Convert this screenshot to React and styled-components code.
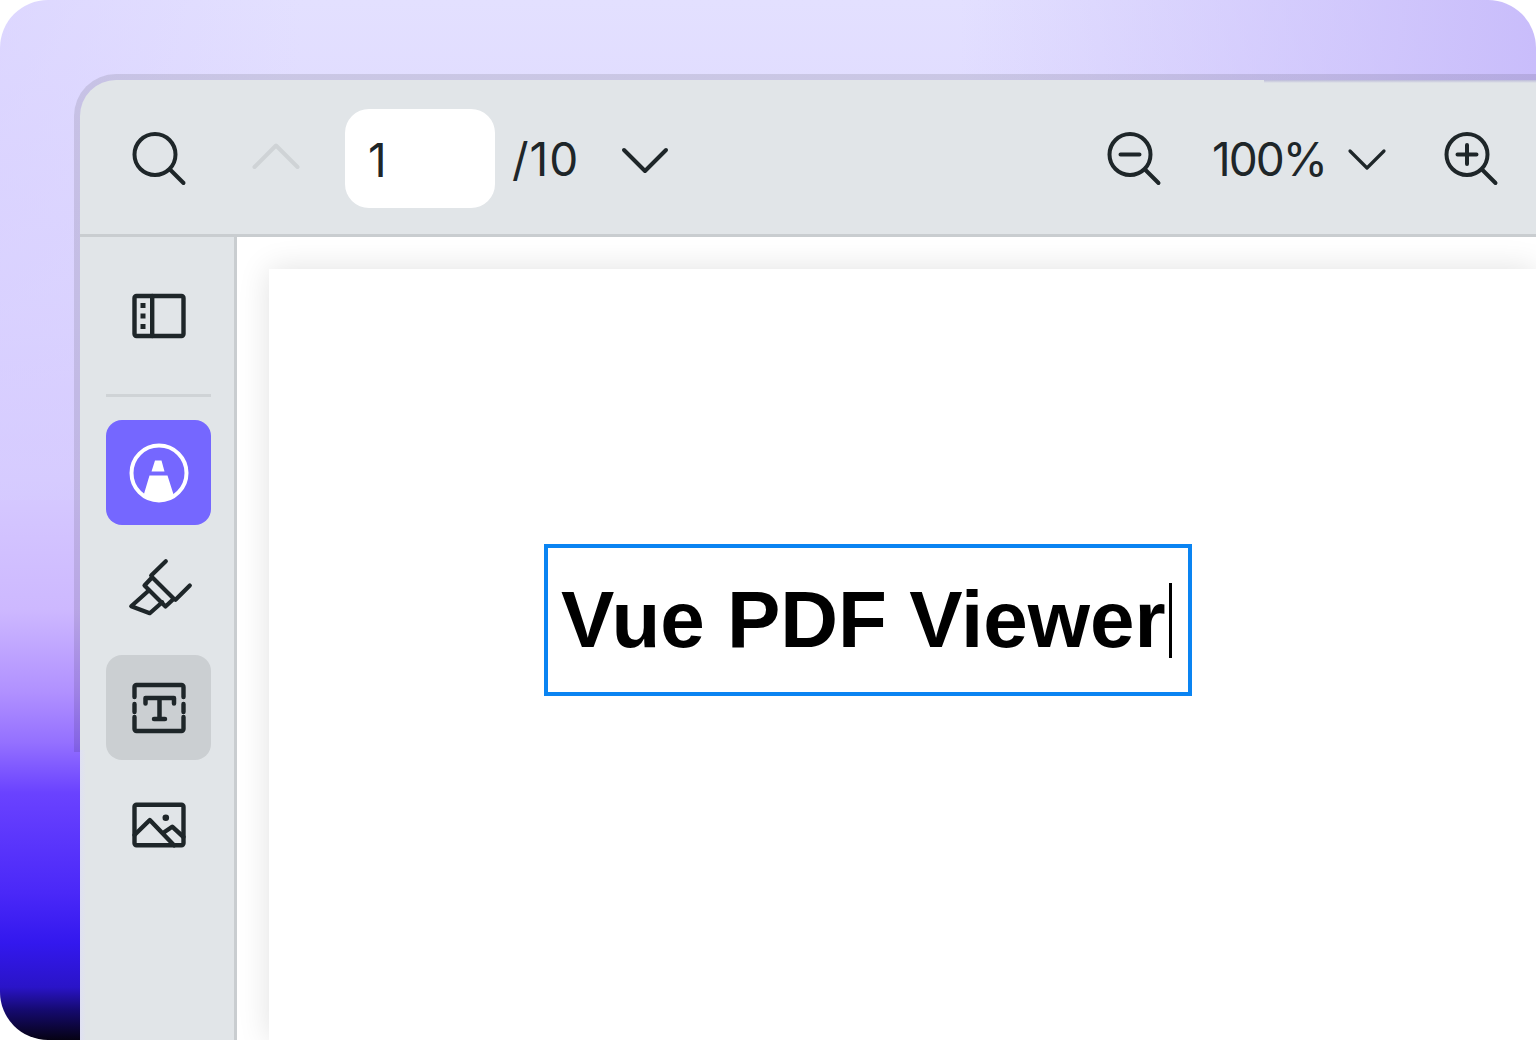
import styled, { createGlobalStyle } from "styled-components";

const GlobalStyle = createGlobalStyle`
  html, body {
    margin: 0;
    padding: 0;
    background: #ffffff;
  }
`;

const Stage = styled.div`
  width: 1536px;
  height: 1040px;
  box-sizing: border-box;
  padding: 74px 0 0 74px;
  overflow: hidden;
  border-radius: 48px 48px 0 48px;
  background:
    linear-gradient(to right, rgba(201, 189, 251, 0) 960px, #c9bdfb 1536px),
    linear-gradient(to right, rgba(214, 205, 255, 0.45) 0, rgba(214, 205, 255, 0) 300px) left top / 300px 500px no-repeat,
    linear-gradient(
      to bottom,
      #e3e0ff 0,
      #dcd5ff 300px,
      #d6caff 480px,
      #cdb8ff 610px,
      #b090ff 693px,
      #9470ff 743px,
      #6a42ff 793px,
      #4a28f8 893px,
      #3318ee 943px,
      #2a14c8 987px,
      #150a70 1010px,
      #060214 1040px
    );
  font-family: Inter, "Liberation Sans", sans-serif;
`;

const Frame = styled.div`
  position: relative;
  width: 1462px;
  height: 966px;
  box-sizing: border-box;
  padding: 6px 0 0 6px;
  border-top-left-radius: 42px;
  background: linear-gradient(to bottom, rgba(0, 0, 0, 0.1) 678px, rgba(0, 0, 0, 0) 678px);

  &::after {
    content: "";
    position: absolute;
    top: 6px;
    right: 0;
    width: 272px;
    height: 3px;
    background: linear-gradient(to bottom, rgba(120, 110, 190, 0.35), rgba(120, 110, 190, 0));
  }
`;

const Viewer = styled.div`
  display: grid;
  grid-template-rows: 157px 1fr;
  height: 100%;
  overflow: hidden;
  border-top-left-radius: 36px;
  background: #e1e5e8;
`;

const Toolbar = styled.div`
  display: flex;
  align-items: center;
  justify-content: space-between;
  box-sizing: border-box;
  padding: 0 13px 0 26px;
  border-bottom: 3px solid #c9cdd0;
`;

const ToolGroup = styled.div`
  display: flex;
  align-items: center;
`;

const IconSlot = styled.div`
  display: flex;
  align-items: center;
  justify-content: center;
  flex: none;
  width: ${(p) => p.$width || 105}px;
  height: 105px;
  box-sizing: border-box;
  border-radius: 16px;
  background: ${(p) => p.$bg || "transparent"};
`;

const PageChevronSlot = styled(IconSlot)`
  margin-left: 13px;
`;

const ZoomChevronSlot = styled(IconSlot)`
  margin-right: 8px;
`;

const Icon = styled.svg`
  display: block;
  flex: none;
  width: 60px;
  height: 60px;
  overflow: visible;
  fill: none;
  stroke: ${(p) => p.$color || "#1e2629"};
  stroke-width: ${(p) => p.$stroke || 4};
  stroke-linecap: round;
  stroke-linejoin: round;
`;

const PageInput = styled.div`
  width: 150px;
  height: 99px;
  box-sizing: border-box;
  margin: 3px 0 0 4px;
  padding-left: 23px;
  border-radius: 24px;
  background: #ffffff;
  color: #1e2629;
  font-size: 46px;
  font-weight: 400;
  line-height: 102px;
`;

const PageTotal = styled.span`
  margin: 3px 0 0 17px;
  color: #1e2629;
  font-size: 46px;
  font-weight: 400;
  letter-spacing: 1px;
  line-height: 1;
`;

const ZoomValue = styled.span`
  margin: 3px -2px 0 26px;
  color: #1e2629;
  font-size: 46px;
  font-weight: 400;
  letter-spacing: -2px;
  line-height: 1;
`;

const Body = styled.div`
  display: grid;
  grid-template-columns: 157px 1fr;
  min-height: 0;
`;

const Sidebar = styled.div`
  display: flex;
  flex-direction: column;
  align-items: flex-start;
  box-sizing: border-box;
  padding: 26px 0 0 26px;
  border-right: 3px solid #c9cdd0;
  background: linear-gradient(to right, #dfe0f3, #e1e5e8) left bottom / 6px 290px no-repeat;
`;

const Divider = styled.div`
  width: 105px;
  height: 3px;
  flex: none;
  margin: 26px 0 23px;
  background: #cfd3d6;
`;

const ToolStack = styled.div`
  display: flex;
  flex-direction: column;
  gap: 12.5px;
`;

const Workspace = styled.div`
  min-width: 0;
  padding: 32px 0 0 32px;
  overflow: hidden;
  background: #ffffff;
`;

const PdfPage = styled.div`
  height: 100%;
  box-sizing: border-box;
  padding: 275px 0 0 275px;
  background: #ffffff;
  box-shadow: 0 0 30px rgba(0, 0, 0, 0.12);
`;

const TextBox = styled.div`
  display: flex;
  align-items: center;
  width: 648px;
  height: 152px;
  box-sizing: border-box;
  padding-left: 13px;
  border: 4px solid #0a84f2;
  color: #000000;
  font-family: "Liberation Sans", Arial, sans-serif;
  font-size: 80px;
  font-weight: 700;
  line-height: 1;
  white-space: nowrap;
`;

const Caret = styled.span`
  flex: none;
  width: 3px;
  height: 75px;
  margin-left: 3px;
  background: #000000;
`;

const SearchIcon = () => (
  <Icon viewBox="0 0 60 60">
    <circle cx="26" cy="27.5" r="20.5" />
    <path d="M41.5 43 54.5 56" />
  </Icon>
);

const ZoomOutIcon = () => (
  <Icon viewBox="0 0 60 60">
    <circle cx="26" cy="27.5" r="20.5" />
    <path d="M41.5 43 54.5 56M16.5 27.5h19" />
  </Icon>
);

const ZoomInIcon = () => (
  <Icon viewBox="0 0 60 60">
    <circle cx="26" cy="27.5" r="20.5" />
    <path d="M41.5 43 54.5 56M16.5 27.5h19M26 18v19" />
  </Icon>
);

const ChevronUp = () => (
  <Icon viewBox="0 0 60 60" $color="#cfd3d6">
    <path d="M8.5 40 30 18.5 51.5 40" />
  </Icon>
);

const ChevronDown = () => (
  <Icon viewBox="0 0 60 60">
    <path d="M9 23 30 44 51 23" />
  </Icon>
);

const ChevronSmall = () => (
  <Icon viewBox="0 0 60 60" $stroke={3.2}>
    <path d="M13 24 30 41 47 24" />
  </Icon>
);

const PanelIcon = () => (
  <Icon viewBox="0 0 60 60" $stroke={4.4}>
    <rect x="5.5" y="10" width="49" height="40" rx="2" />
    <path d="M23.2 10v40" />
    <path
      d="M11.5 17h5v5h-5zM11.5 27.5h5v5h-5zM11.5 38h5v5h-5z"
      fill="#1e2629"
      stroke="none"
    />
  </Icon>
);

const AnnotateIcon = () => (
  <Icon viewBox="0 0 60 60" $color="#ffffff">
    <circle cx="30" cy="30" r="27.5" />
    <path
      d="M26 17.5h6.5l3 11h-13zM20.5 32.5h18L45 53a27.5 27.5 0 0 1-30.5-.5z"
      fill="#ffffff"
      stroke="none"
    />
  </Icon>
);

const HighlighterIcon = () => (
  <Icon viewBox="0 3.5 60 60" $stroke={4.2}>
    <path d="M36.8 4.7 22.2 19M60.8 29 46.5 43.3" />
    <path d="M23.2 20.7 44.8 42.3 36.5 50 15.5 29z" />
    <path d="M19.8 34 2.2 49.7l18.6 7L33.2 45.7" />
  </Icon>
);

const TextToolIcon = () => (
  <Icon viewBox="0 0 60 60" $stroke={4.4}>
    <path d="M5.5 19V9a2 2 0 0 1 2-2h45a2 2 0 0 1 2 2v10" />
    <path d="M5.5 39v12a2 2 0 0 0 2 2h45a2 2 0 0 0 2-2V39" />
    <path d="M5.5 26v8M54.5 26v8" />
    <path d="M16.5 25.5v-5.5h28.5v5.5M30.5 20v21M25 41h11" strokeWidth="4.5" />
  </Icon>
);

const ImageIcon = () => (
  <Icon viewBox="0 0 60 60" $stroke={4.4}>
    <rect x="5.5" y="9.7" width="49" height="40.6" rx="2" />
    <path d="M5.5 40 20.8 25 45 50.3M34 38l9.2-6.3L54.5 42" />
    <circle cx="36.8" cy="22.7" r="3.3" fill="#1e2629" stroke="none" />
  </Icon>
);

export default function App() {
  return (
    <>
      <GlobalStyle />
      <Stage>
        <Frame>
          <Viewer>
            <Toolbar>
              <ToolGroup>
                <IconSlot>
                  <SearchIcon />
                </IconSlot>
                <IconSlot $width={130}>
                  <ChevronUp />
                </IconSlot>
                <PageInput>1</PageInput>
                <PageTotal>/10</PageTotal>
                <PageChevronSlot>
                  <ChevronDown />
                </PageChevronSlot>
              </ToolGroup>
              <ToolGroup>
                <IconSlot>
                  <ZoomOutIcon />
                </IconSlot>
                <ZoomValue>100%</ZoomValue>
                <ZoomChevronSlot $width={86}>
                  <ChevronSmall />
                </ZoomChevronSlot>
                <IconSlot>
                  <ZoomInIcon />
                </IconSlot>
              </ToolGroup>
            </Toolbar>
            <Body>
              <Sidebar>
                <IconSlot>
                  <PanelIcon />
                </IconSlot>
                <Divider />
                <ToolStack>
                  <IconSlot $bg="#7567ff">
                    <AnnotateIcon />
                  </IconSlot>
                  <IconSlot>
                    <HighlighterIcon />
                  </IconSlot>
                  <IconSlot $bg="#cbcfd2">
                    <TextToolIcon />
                  </IconSlot>
                  <IconSlot>
                    <ImageIcon />
                  </IconSlot>
                </ToolStack>
              </Sidebar>
              <Workspace>
                <PdfPage>
                  <TextBox>
                    Vue PDF Viewer
                    <Caret />
                  </TextBox>
                </PdfPage>
              </Workspace>
            </Body>
          </Viewer>
        </Frame>
      </Stage>
    </>
  );
}
